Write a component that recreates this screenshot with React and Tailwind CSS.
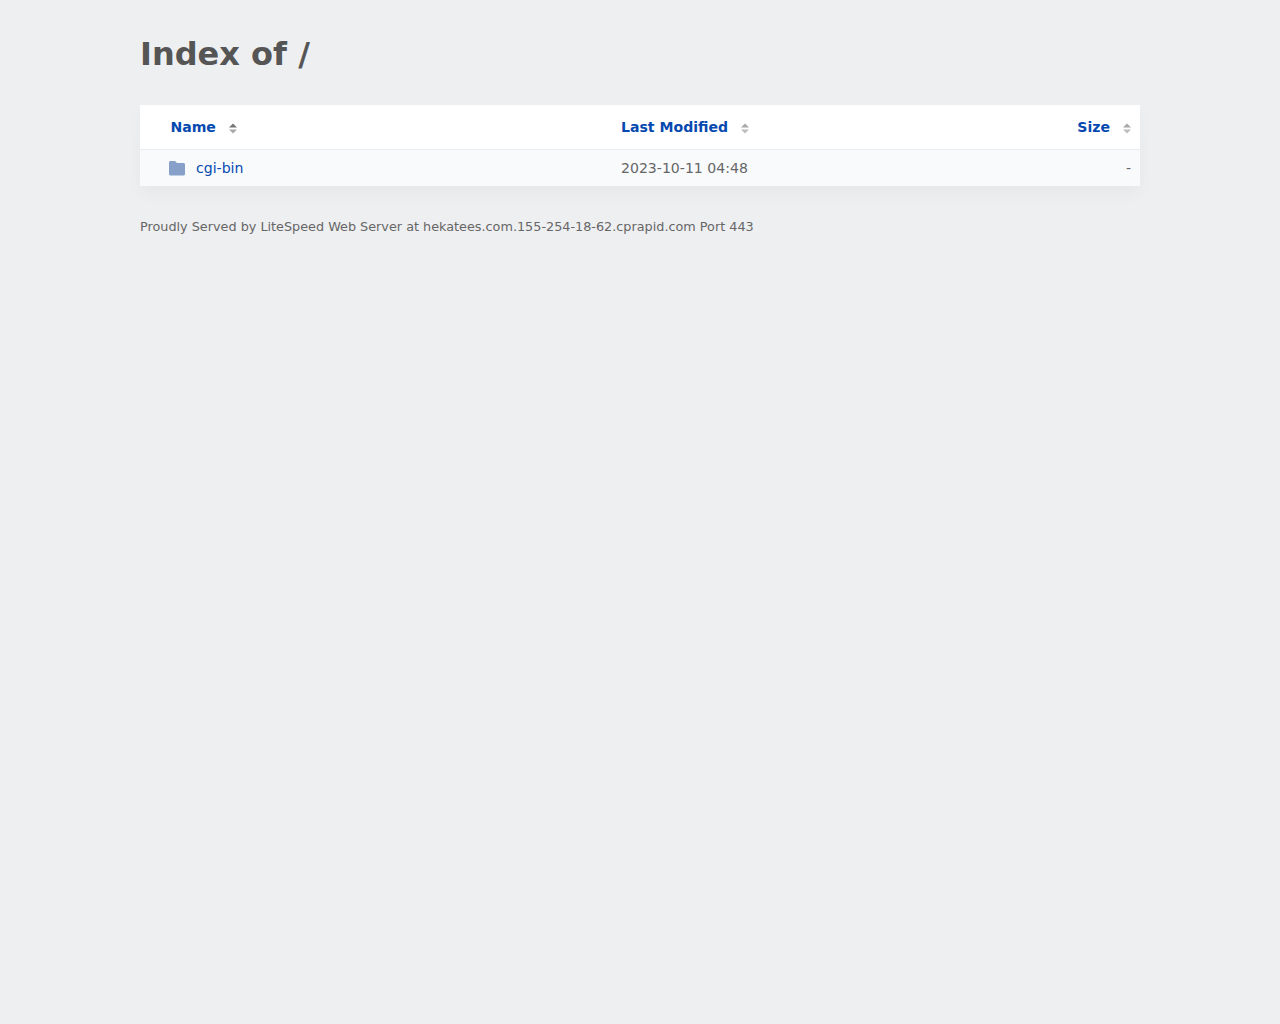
const SortIcon = ({ active }) => (
  <svg width="10" height="12" viewBox="0 0 10 12" className="shrink-0">
    <path d="M5 1.5 L9 5.5 H1 Z" fill={active ? "#757575" : "#a8a8a8"} />
    <path d="M5 11.5 L1 7.5 H9 Z" fill={active ? "#a8a8a8" : "#bdbdbd"} />
  </svg>
);

const FolderIcon = () => (
  <svg width="16" height="15" viewBox="0 0 16 15" className="shrink-0">
    <path
      d="M1.5 0 H6 L8 2 H14.5 C15.3 2 16 2.7 16 3.5 V13 C16 13.8 15.3 14.5 14.5 14.5 H1.5 C0.7 14.5 0 13.8 0 13 V1.5 C0 0.7 0.7 0 1.5 0 Z"
      fill="#86a0c9"
    />
  </svg>
);

export default function App() {
  return (
    <div className="min-h-screen bg-[#eeeff1] font-['DejaVu_Sans',sans-serif]">
      <div className="w-[1000px] mx-auto pt-4">
        <h1 className="text-[32px] leading-[76px] font-bold text-[#555555]">Index of /</h1>
        <div className="mt-[13px] bg-white shadow-[0_8px_16px_rgba(10,10,10,0.035)]">
          <div className="flex h-[45px] pt-[2px] items-center border-b border-[#eaecef] text-[14.08px] font-bold text-[#0549b0]">
            <div className="w-[481px] pl-[30.4px] flex items-center gap-[12.4px]">
              Name
              <SortIcon active />
            </div>
            <div className="flex-1 flex items-center gap-3">
              Last Modified
              <SortIcon />
            </div>
            <div className="pr-[8px] flex items-center gap-3">
              Size
              <SortIcon />
            </div>
          </div>
          <div className="flex h-[36px] pt-[2px] items-center bg-[#f8fafc] text-[14.08px] text-[#666666]">
            <div className="w-[481px] pl-[29px] flex items-center gap-[11px] text-[#0549b0]">
              <FolderIcon />
              cgi-bin
            </div>
            <div className="flex-1">2023-10-11 04:48</div>
            <div className="pr-[9px]">-</div>
          </div>
        </div>
        <p className="mt-[31px] text-[12.8px] text-[#666666]">
          Proudly Served by LiteSpeed Web Server at hekatees.com.155-254-18-62.cprapid.com Port 443
        </p>
      </div>
    </div>
  );
}
